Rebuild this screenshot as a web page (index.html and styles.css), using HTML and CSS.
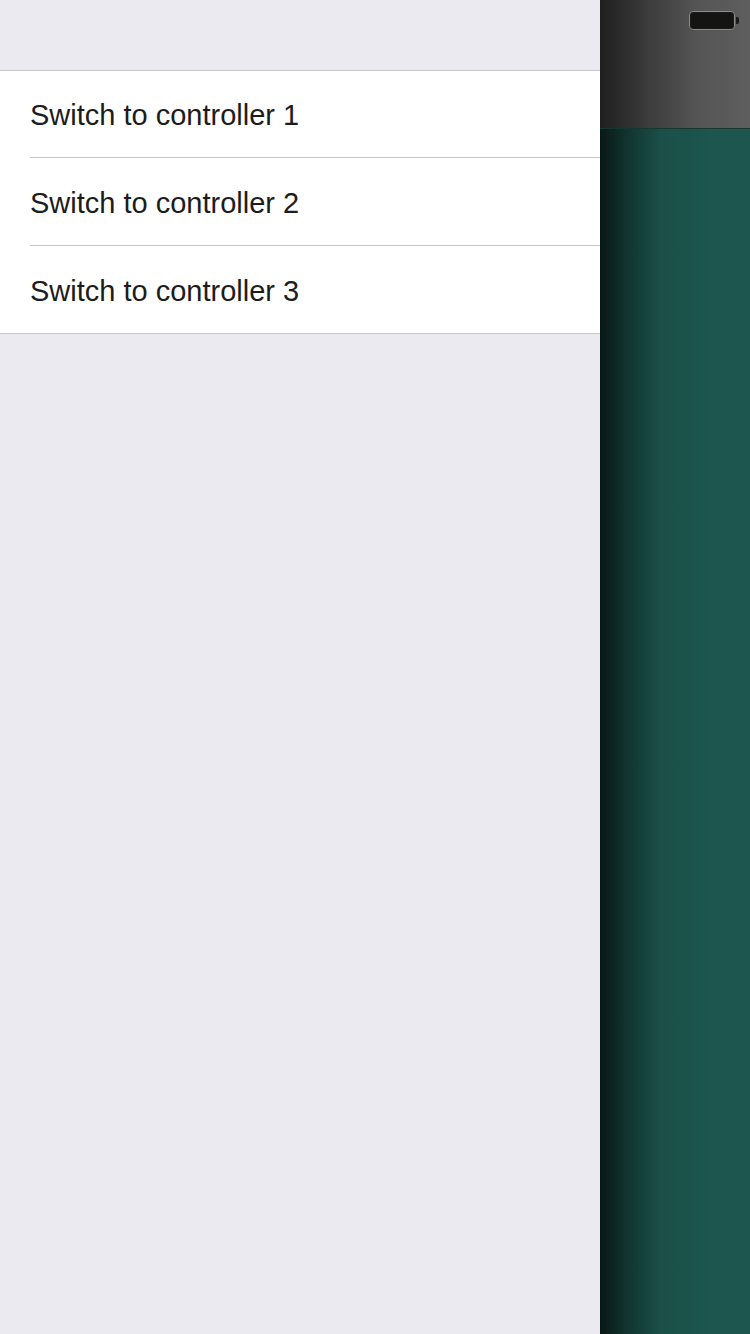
FILE: index.html
```html
<!DOCTYPE html>
<html>
<head>
<meta charset="utf-8">
<link rel="stylesheet" href="styles.css">
</head>
<body>
<div class="screen">
  <div class="menu">
    <div class="menu-top"></div>
    <ul class="list">
      <li class="row first"><span class="label">Switch to controller 1</span></li>
      <li class="row"><span class="label">Switch to controller 2</span></li>
      <li class="row last"><span class="label">Switch to controller 3</span></li>
    </ul>
  </div>
  <div class="content">
    <div class="navbar">
      <div class="status">
        <div class="battery"><div class="battery-body"></div><div class="battery-nub"></div></div>
      </div>
    </div>
    <div class="body"></div>
    <div class="shadow"></div>
  </div>
</div>
</body>
</html>
```
FILE: styles.css
```css
* { box-sizing: border-box; }
html, body { margin: 0; padding: 0; }
body { width: 750px; height: 1334px; overflow: hidden; font-family: "Liberation Sans", Arial, sans-serif; }
.screen { display: flex; width: 750px; height: 1334px; }
.menu { width: 600px; height: 1334px; background: #ebeaf1; }
.menu-top { height: 70px; }
.list { list-style: none; margin: 0; padding: 0; background: #fff; border-top: 1px solid #c8c7cc; border-bottom: 1px solid #c8c7cc; }
.row { height: 88px; margin-left: 30px; border-bottom: 1px solid #c8c7cc; display: flex; align-items: center; padding-top: 3px; }
.row.first { height: 87px; }
.row.last { border-bottom: none; height: 87px; }
.label { font-size: 29px; color: #1c1c1c; letter-spacing: 0; }
.content { position: relative; width: 150px; height: 1334px; display: flex; flex-direction: column; background: #1c564e; }
.navbar { height: 129px; background: linear-gradient(to right, #1f1f1f 0%, #3a3a3a 30%, #555 65%, #5e5e5e 100%); border-bottom: 1px solid #163630; }
.status { display: flex; justify-content: flex-end; padding: 11px 11px 0 0; }
.battery { display: flex; align-items: center; }
.battery-body { width: 46px; height: 19px; border: 1.5px solid #8a8a8a; border-radius: 4px; background: #141412; box-shadow: inset 0 0 0 1px #1a1a1a; }
.battery-nub { width: 3px; height: 7px; background: #1a1a1a; border-radius: 0 2px 2px 0; margin-left: 1px; }
.body { flex: 1; }
.shadow { position: absolute; left: 0; top: 129px; bottom: 0; width: 110px; background: linear-gradient(to right, rgba(8,20,18,0.95) 0%, rgba(10,30,27,0.6) 25%, rgba(20,60,55,0.25) 55%, rgba(28,86,78,0) 100%); }
```
